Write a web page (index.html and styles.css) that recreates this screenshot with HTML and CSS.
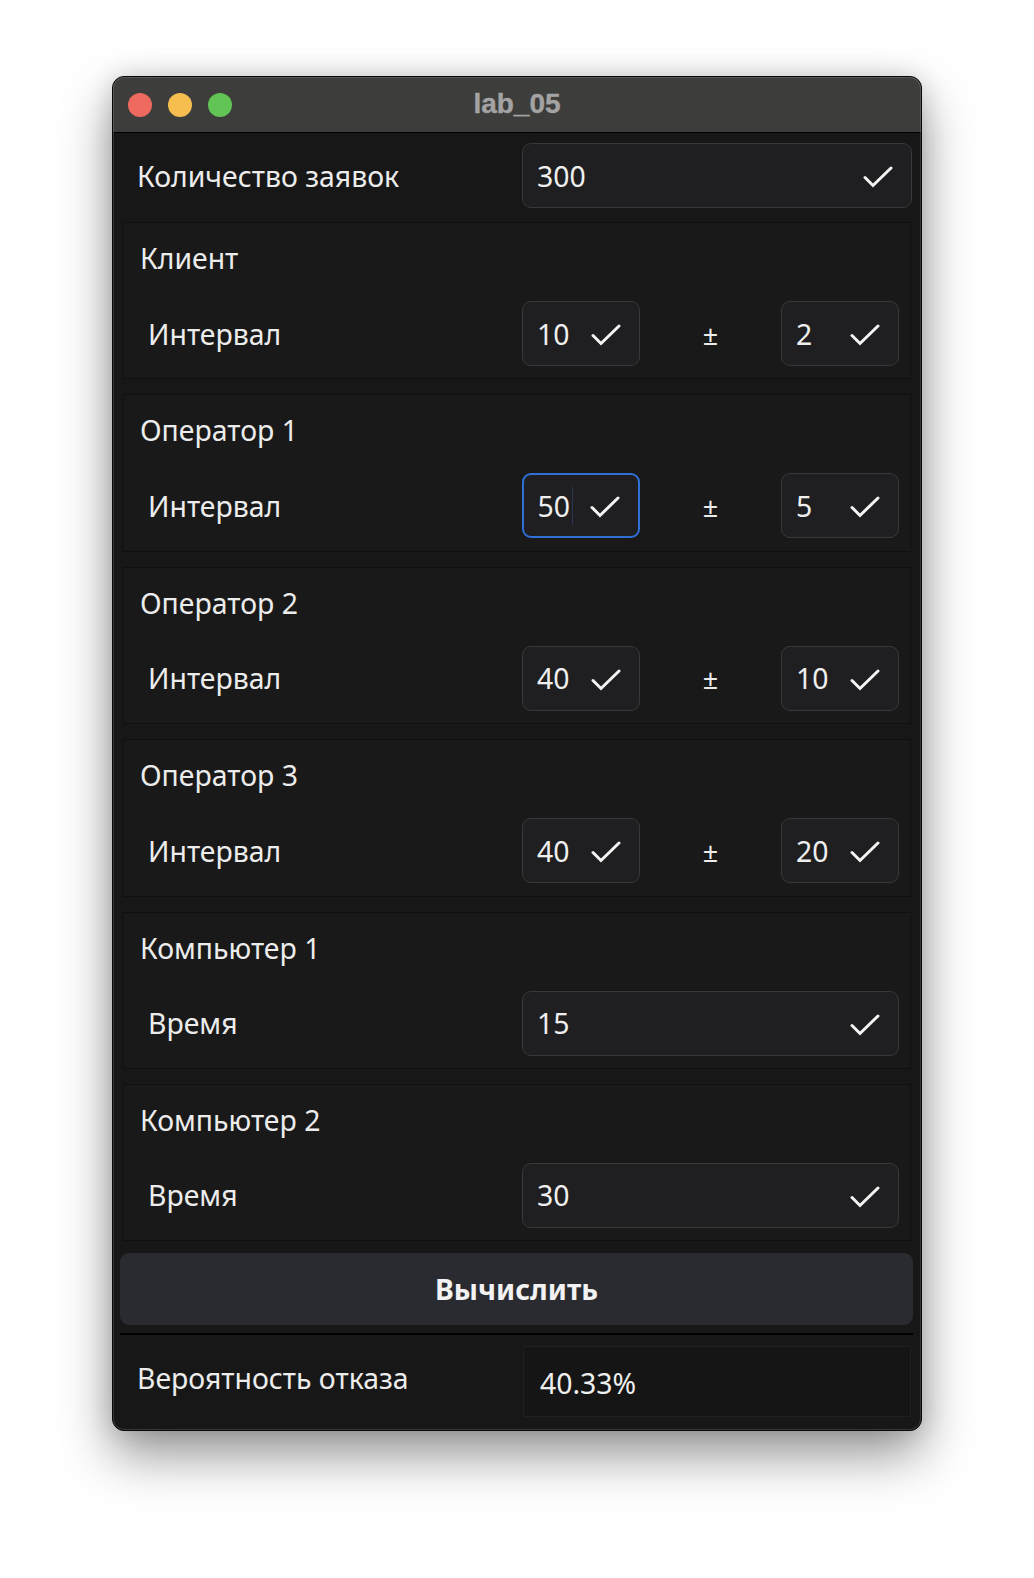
FILE: index.html
```html
<!DOCTYPE html>
<html lang="ru">
<head>
<meta charset="utf-8">
<title>lab_05</title>
<link rel="stylesheet" href="styles.css">
</head>
<body>
<div class="window">
  <header class="titlebar">
    <div class="lights">
      <span class="light red"></span>
      <span class="light yellow"></span>
      <span class="light green"></span>
    </div>
    <div class="title">lab_05</div>
    <div></div>
  </header>
  <main class="content">
    <div class="top-row">
      <span class="top-label">Количество заявок</span>
      <div class="field"><span class="val">300</span><svg class="check" viewBox="0 0 30 22"><polyline points="2,11.5 10,19.5 28,2"/></svg></div>
    </div>

    <section class="group">
      <div class="group-title">Клиент</div>
      <div class="param">
        <span class="param-label">Интервал</span>
        <div class="field"><span class="val">10</span><svg class="check" viewBox="0 0 30 22"><polyline points="2,11.5 10,19.5 28,2"/></svg></div>
        <span class="pm">±</span>
        <div class="field"><span class="val">2</span><svg class="check" viewBox="0 0 30 22"><polyline points="2,11.5 10,19.5 28,2"/></svg></div>
      </div>
    </section>

    <section class="group">
      <div class="group-title">Оператор 1</div>
      <div class="param">
        <span class="param-label">Интервал</span>
        <div class="field focused"><span class="val">50</span><span class="caret"></span><svg class="check" viewBox="0 0 30 22"><polyline points="2,11.5 10,19.5 28,2"/></svg></div>
        <span class="pm">±</span>
        <div class="field"><span class="val">5</span><svg class="check" viewBox="0 0 30 22"><polyline points="2,11.5 10,19.5 28,2"/></svg></div>
      </div>
    </section>

    <section class="group">
      <div class="group-title">Оператор 2</div>
      <div class="param">
        <span class="param-label">Интервал</span>
        <div class="field"><span class="val">40</span><svg class="check" viewBox="0 0 30 22"><polyline points="2,11.5 10,19.5 28,2"/></svg></div>
        <span class="pm">±</span>
        <div class="field"><span class="val">10</span><svg class="check" viewBox="0 0 30 22"><polyline points="2,11.5 10,19.5 28,2"/></svg></div>
      </div>
    </section>

    <section class="group">
      <div class="group-title">Оператор 3</div>
      <div class="param">
        <span class="param-label">Интервал</span>
        <div class="field"><span class="val">40</span><svg class="check" viewBox="0 0 30 22"><polyline points="2,11.5 10,19.5 28,2"/></svg></div>
        <span class="pm">±</span>
        <div class="field"><span class="val">20</span><svg class="check" viewBox="0 0 30 22"><polyline points="2,11.5 10,19.5 28,2"/></svg></div>
      </div>
    </section>

    <section class="group">
      <div class="group-title">Компьютер 1</div>
      <div class="param param-wide">
        <span class="param-label">Время</span>
        <div class="field"><span class="val">15</span><svg class="check" viewBox="0 0 30 22"><polyline points="2,11.5 10,19.5 28,2"/></svg></div>
      </div>
    </section>

    <section class="group">
      <div class="group-title">Компьютер 2</div>
      <div class="param param-wide">
        <span class="param-label">Время</span>
        <div class="field"><span class="val">30</span><svg class="check" viewBox="0 0 30 22"><polyline points="2,11.5 10,19.5 28,2"/></svg></div>
      </div>
    </section>

    <button class="calc">Вычислить</button>
    <div class="divider"></div>

    <div class="result-row">
      <span class="result-label">Вероятность отказа</span>
      <div class="result-box"><span class="result-val">40.33%</span></div>
    </div>
  </main>
</div>
</body>
</html>
```

FILE: styles.css
```css
* { box-sizing: border-box; }

html, body {
  margin: 0;
  padding: 0;
  background: #ffffff;
}

body {
  font-family: "Noto Sans", "Open Sans", sans-serif;
  color: #ececec;
  padding: 76px 0 0 112px;
  height: 1578px;
  overflow: hidden;
}

.window {
  position: relative;
  width: 810px;
  border: 1px solid #080808;
  border-radius: 12px;
  overflow: hidden;
  background: #171717;
  box-shadow: 0 24px 52px rgba(0, 0, 0, 0.42), 0 0 24px rgba(0, 0, 0, 0.14);
}

.window::after {
  content: "";
  position: absolute;
  inset: 0;
  border-radius: 11px;
  box-shadow: inset 0 0 0 1px rgba(255, 255, 255, 0.14);
  pointer-events: none;
}

.titlebar {
  height: 56px;
  background: #3d3d3b;
  border-bottom: 1px solid #000;
  display: grid;
  grid-template-columns: 1fr auto 1fr;
  align-items: center;
}

.lights {
  display: flex;
  gap: 16px;
  padding-left: 15px;
  padding-top: 1px;
}

.light {
  width: 24px;
  height: 24px;
  border-radius: 50%;
}
.red { background: #ee6a5f; }
.yellow { background: #f5be4f; }
.green { background: #61c454; }

.title {
  font-family: "Liberation Sans", Arial, sans-serif;
  font-weight: 700;
  font-size: 28px;
  color: #a3a3a3;
  margin-top: -2px;
  -webkit-text-stroke: 0.4px #a3a3a3;
}

.content {
  padding: 10px 9px 13px 9px;
  display: flex;
  flex-direction: column;
  font-size: 28.4px;
  line-height: 38px;
}

.top-row {
  display: grid;
  grid-template-columns: 400px 1fr;
  align-items: center;
  margin-bottom: 14px;
}

.top-label {
  padding-left: 15px;
}

.field {
  height: 65px;
  background: #1f1f21;
  border: 1.5px solid #38383a;
  border-radius: 9px;
  display: flex;
  align-items: center;
  padding: 0 18px 0 14px;
}

.field.focused {
  border: 2px solid #2f6fd8;
  padding-left: 13.5px;
}

.val {
  flex: 1 1 auto;
  color: #efefef;
}

.focused .val {
  flex: 0 0 auto;
}

.caret {
  flex: 1 1 auto;
  align-self: center;
  height: 38px;
  margin-left: 2px;
  border-left: 1.5px solid #2b3452;
}

.check {
  width: 30px;
  height: 22px;
  margin-top: 3px;
  flex: 0 0 auto;
}

.check polyline {
  fill: none;
  stroke: #f4f4f4;
  stroke-width: 3;
  stroke-linecap: round;
  stroke-linejoin: miter;
}

.group {
  margin: 0 0 15px 1px;
  width: 788px;
  height: 157.4px;
  background: #191919;
  border: 1px solid #101010;
  padding: 16px 11px 11px 0;
}

.group-title {
  padding-left: 16px;
  margin-bottom: 24px;
}

.param {
  display: grid;
  grid-template-columns: 398px 118px 141px 118px;
  align-items: center;
}

.param-wide {
  grid-template-columns: 398px 1fr;
}

.param-label {
  padding-left: 24px;
}

.pm {
  text-align: center;
  font-size: 27px;
  padding-top: 2px;
}

.calc {
  margin: -3px -1px 0 -2px;
  height: 72px;
  border: none;
  border-radius: 9px;
  background: #2a2b30;
  color: #f2f2f2;
  font-family: "Noto Sans", "Open Sans", sans-serif;
  font-weight: 700;
  font-size: 28.4px;
  padding: 0;
}

.divider {
  margin: 8px -1px 0 -2px;
  height: 2px;
  background: #000;
}

.result-row {
  margin-top: 11px;
  display: grid;
  grid-template-columns: 401px 388px;
  align-items: center;
}

.result-label {
  padding-left: 15px;
  margin-bottom: 7px;
}

.result-box {
  height: 71px;
  background: #151515;
  border: 1px solid #202020;
  display: flex;
  align-items: center;
  padding: 3px 0 0 16px;
}

.result-val {
  color: #efefef;
}
```
